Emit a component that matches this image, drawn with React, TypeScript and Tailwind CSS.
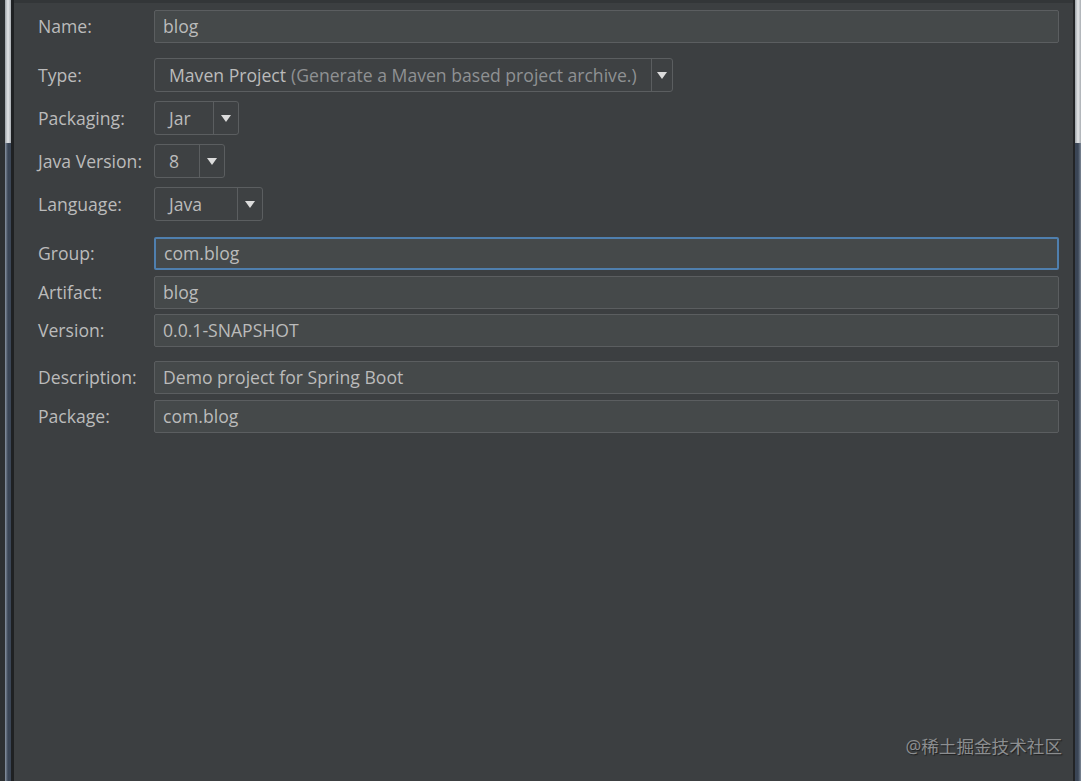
import * as React from 'react';

const font = { fontFamily: '"Open Sans", "Noto Sans", "Noto Sans CJK SC", sans-serif' };

function Label({ children }: { children: React.ReactNode }) {
  return <div className="w-[116px] shrink-0 whitespace-nowrap text-[17.6px] text-[#bbbbbb]">{children}</div>;
}

function TextField({ value, focused }: { value: string; focused?: boolean }) {
  return (
    <div
      className={
        'flex h-[33px] flex-1 items-center rounded-[2px] px-[8px] text-[17.6px] text-[#bbbbbb] ' +
        (focused
          ? 'border-2 border-[#4f7fae] bg-[#45494a] px-[7px]'
          : 'border border-[#5b5e60] bg-[#45494a]')
      }
    >
      {value}
    </div>
  );
}

function Combo({ width, children }: { width: string; children: React.ReactNode }) {
  return (
    <div className={'flex h-[34px] items-stretch rounded-[3px] border border-[#5b5e60] bg-[#3e4143] ' + width}>
      <div className="flex flex-1 items-center whitespace-nowrap px-[14px] text-[17.6px] text-[#bbbbbb]">{children}</div>
      <div className="flex w-[25px] items-center justify-center border-l border-[#5b5e60]">
        <svg width="10" height="7" viewBox="0 0 10 7">
          <path d="M0 0 H10 L5 7 Z" fill="#dcdcdc" />
        </svg>
      </div>
    </div>
  );
}

function Row({ mt, children }: { mt: string; children: React.ReactNode }) {
  return <div className={'flex items-center ' + mt}>{children}</div>;
}

function Frame({ side }: { side: 'left' | 'right' }) {
  return (
    <div className="flex w-[6px] shrink-0 flex-col">
      <div className="h-[143px] bg-gradient-to-r from-[#9da3a8] via-[#e4e6e8] to-[#a9aeb3]" />
      <div className={'flex-1 bg-gradient-to-r ' + (side === 'left' ? 'from-[#8a95a3] via-[#3a4555] to-[#3a4555]' : 'from-[#3a4555] via-[#3a4555] to-[#7d8896]')} />
    </div>
  );
}

export default function App() {
  return (
    <div className="flex h-[781px] w-[1087px] overflow-hidden bg-[#2b2d2f]" style={font}>
      <div className="w-[5px] shrink-0 bg-[#2d3032]" />
      <Frame side="left" />
      <div className="w-[3px] shrink-0 bg-[#1f2123]" />
      <div className="relative flex flex-1 flex-col border-t-[3px] border-[#333638] bg-[#3c3f41] pl-[24px] pr-[14px]">
        <Row mt="mt-[7px]">
          <Label>Name:</Label>
          <TextField value="blog" />
        </Row>
        <Row mt="mt-[15px]">
          <Label>Type:</Label>
          <Combo width="w-[519px]">
            Maven Project<span className="ml-[5px] text-[#8f9193]">(Generate a Maven based project archive.)</span>
          </Combo>
        </Row>
        <Row mt="mt-[9px]">
          <Label>Packaging:</Label>
          <Combo width="w-[85px]">Jar</Combo>
        </Row>
        <Row mt="mt-[9px]">
          <Label>Java Version:</Label>
          <Combo width="w-[71px]">8</Combo>
        </Row>
        <Row mt="mt-[9px]">
          <Label>Language:</Label>
          <Combo width="w-[109px]">Java</Combo>
        </Row>
        <Row mt="mt-[16px]">
          <Label>Group:</Label>
          <TextField value="com.blog" focused />
        </Row>
        <Row mt="mt-[6px]">
          <Label>Artifact:</Label>
          <TextField value="blog" />
        </Row>
        <Row mt="mt-[5px]">
          <Label>Version:</Label>
          <TextField value="0.0.1-SNAPSHOT" />
        </Row>
        <Row mt="mt-[14px]">
          <Label>Description:</Label>
          <TextField value="Demo project for Spring Boot" />
        </Row>
        <Row mt="mt-[6px]">
          <Label>Package:</Label>
          <TextField value="com.blog" />
        </Row>
        <div className="absolute bottom-[22px] right-[11px] text-[17.6px] text-[#8c8e90] [text-shadow:1px_1px_1px_#1e1f20]">
          @稀土掘金技术社区
        </div>
      </div>
      <div className="w-[2px] shrink-0 bg-[#222426]" />
      <Frame side="right" />
      <div className="w-[6px] shrink-0 bg-white" />
    </div>
  );
}
